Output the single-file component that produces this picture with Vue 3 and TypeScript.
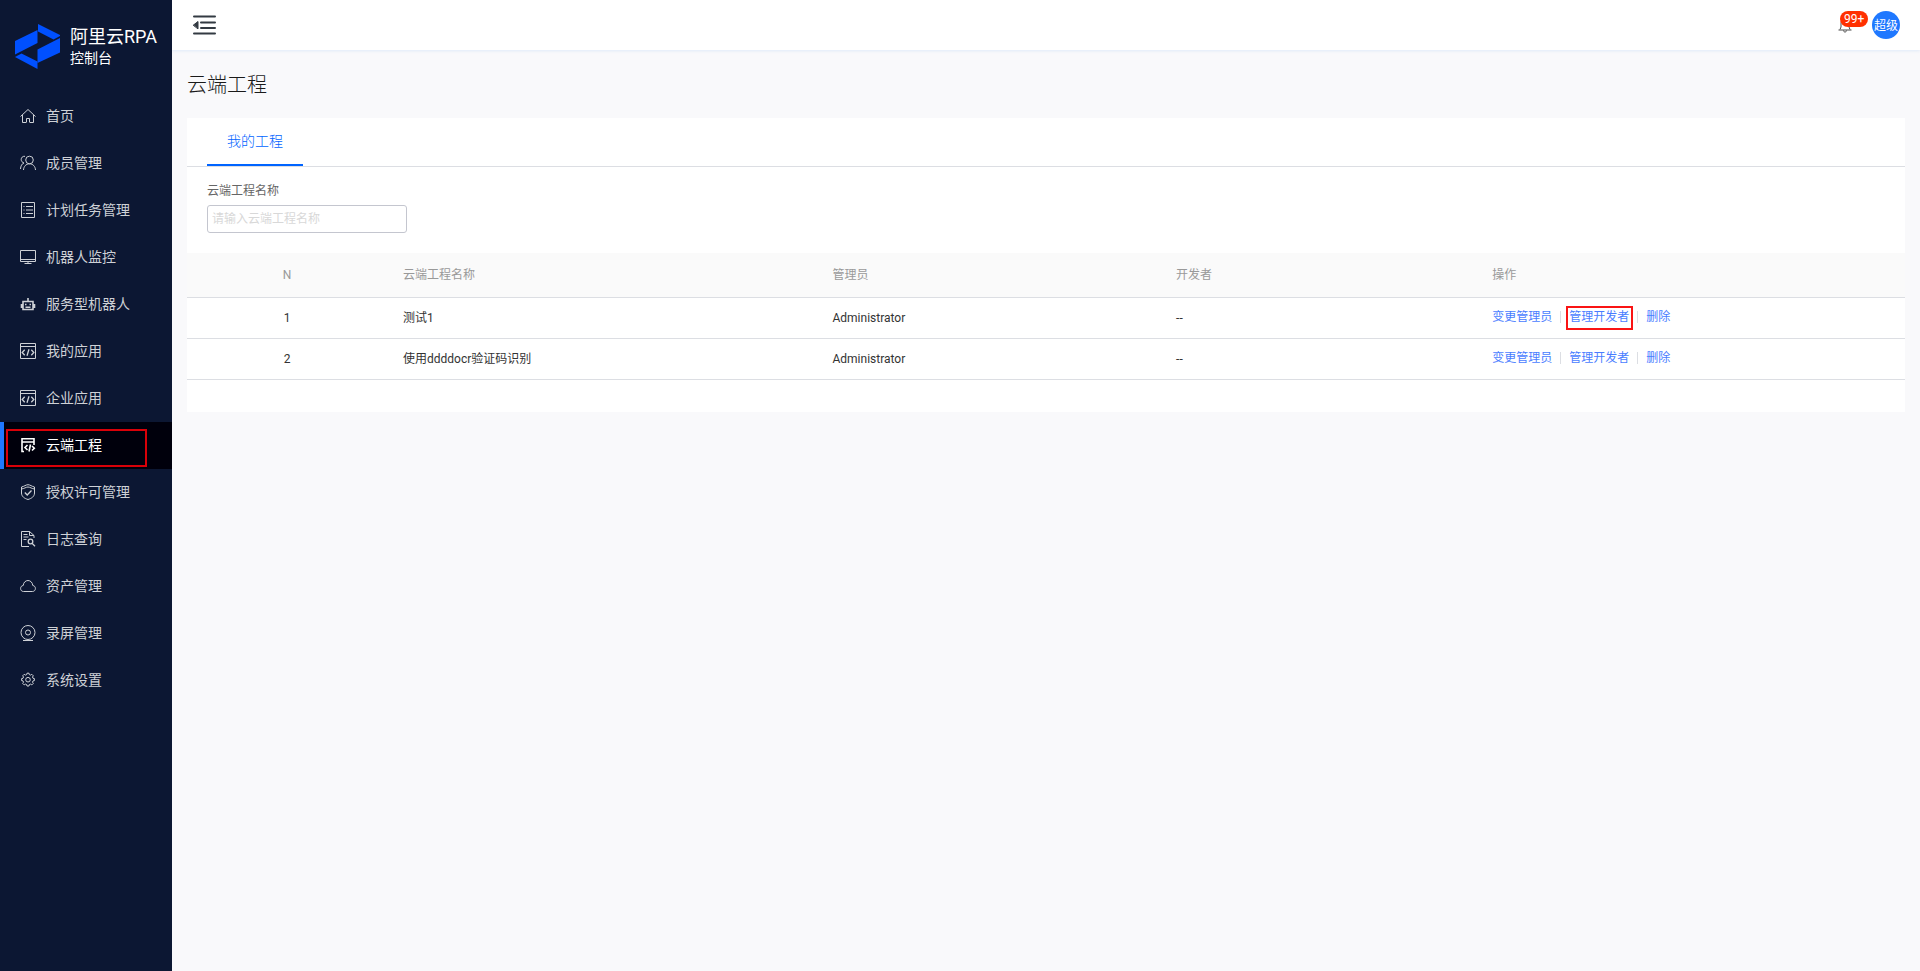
<script setup lang="ts">
import { ref } from 'vue'

interface MenuItem {
  label: string
  icon: string
  active?: boolean
}

interface Project {
  id: number
  name: string
  admin: string
  developer: string
  marked?: boolean
}

const menu: MenuItem[] = [
  { label: '首页', icon: 'home' },
  { label: '成员管理', icon: 'members' },
  { label: '计划任务管理', icon: 'tasks' },
  { label: '机器人监控', icon: 'monitor' },
  { label: '服务型机器人', icon: 'robot' },
  { label: '我的应用', icon: 'code' },
  { label: '企业应用', icon: 'code' },
  { label: '云端工程', icon: 'cloudProject', active: true },
  { label: '授权许可管理', icon: 'shield' },
  { label: '日志查询', icon: 'log' },
  { label: '资产管理', icon: 'cloud' },
  { label: '录屏管理', icon: 'camera' },
  { label: '系统设置', icon: 'gear' },
]

const projects: Project[] = [
  { id: 1, name: '测试1', admin: 'Administrator', developer: '--', marked: true },
  { id: 2, name: '使用ddddocr验证码识别', admin: 'Administrator', developer: '--' },
]

const keyword = ref('')
</script>

<template>
  <div class="layout">
    <aside class="sidebar">
      <div class="brand">
        <svg class="logo" viewBox="0 0 45 45" aria-hidden="true">
          <path d="M0 17 22.500 6V19L0 30.500Z" />
          <path d="M23 0 45 11V12L38.500 15.500 23 7.500Z" />
          <path d="M45 14V28.500L22.500 39V25.500Z" />
          <path d="M0 33 6.500 29.500 22.500 37.500V45Z" />
        </svg>
        <div class="brand-text">
          <strong class="brand-name">阿里云RPA</strong>
          <span class="brand-sub">控制台</span>
        </div>
      </div>
      <nav class="menu" aria-label="主菜单">
        <a
          v-for="item in menu"
          :key="item.label"
          href="#"
          class="menu-item"
          :class="{ active: item.active }"
        >
          <svg class="menu-icon" viewBox="0 0 16 16" aria-hidden="true">
            <g v-if="item.icon === 'home'">
              <path d="M.5 8.500 8 1.500l7.500 7M2.500 7v7.500h3.500M13.500 7v7.500H10M6.500 14.500v-4h3v4" />
            </g>
            <g v-else-if="item.icon === 'members'">
              <circle cx="9.500" cy="5" r="3.800" />
              <path d="M3.500 15c.2-3.500 2.500-6.200 6-6.200s5.800 2.700 6 6.200M5 1.300C2.500 1 1.200 2.800 1.200 4.500S2.300 7.500 4 8C1.800 8.700.7 11 .5 14" />
            </g>
            <g v-else-if="item.icon === 'tasks'">
              <path d="M1.500.5h13v15h-13zM3.500 4.500h1M3.500 8h1M3.500 11.500h1M6 4.500h7M6 8h7M6 11.500h7" />
            </g>
            <g v-else-if="item.icon === 'monitor'">
              <path d="M.5 1.500h15v11H.5zM1 10.500h14M8 12.500v2M4.500 14.500h7" />
            </g>
            <g v-else-if="item.icon === 'robot'" class="bold">
              <path d="M8 2v3M3 5.500h10V13.500H3zM1.500 8v4M14.500 8v4M5.500 11.200h5" />
              <path d="M5 8.500h1.500M9.500 8.500H11" />
            </g>
            <g v-else-if="item.icon === 'code'">
              <path d="M.5.5h15v15H.5zM.5 3.500h15" />
              <path class="glyph" d="M4.700 6.800 2.200 9.500l2.500 2.700M11.300 6.800l2.500 2.700-2.500 2.700M9 6.200l-2 6.600" />
            </g>
            <g v-else-if="item.icon === 'cloudProject'" class="bold">
              <path d="M4 14.500H2V1.800h12V8M2 5h12M7.500 8 5 10.500 7.500 13M12 9l2.300 2.200L12 13.500M10.500 7.500l-1.500 7" />
            </g>
            <g v-else-if="item.icon === 'shield'">
              <path d="M1.500 3C4 2.500 6 .7 8 .7S12 2.500 14.500 3v6c0 3.500-3 5.500-6.500 6.500C4.500 14.500 1.500 12.500 1.500 9zM1.500 5C4 4.800 6 3 8 3s4 1.800 6.500 2" />
              <path class="glyph" d="M4.800 8.500l2.400 2.500L11.500 6.500" />
            </g>
            <g v-else-if="item.icon === 'log'">
              <path d="M9 15.500H1.500V.5h8l4.500 4V7M9.500.5v4H14M3.500 3.500h4M3.500 6h5M3.500 8.500h3" />
              <circle class="glyph" cx="10.500" cy="10.500" r="2.300" />
              <path class="glyph" d="M12 12.300l3 3" />
            </g>
            <g v-else-if="item.icon === 'cloud'">
              <path d="M3.500 13.500C1.500 13.500.6 12 .6 10.500c0-1.700 1-2.800 2.600-3C3.500 4.500 5.500 2.500 8 2.500s4.500 2 4.800 5c1.600.2 2.600 1.300 2.600 3 0 1.500-1 3-3 3z" />
            </g>
            <g v-else-if="item.icon === 'camera'">
              <circle cx="8" cy="7.500" r="7" />
              <circle cx="8" cy="7.500" r="2.500" />
              <path d="M3 15.500h10" />
            </g>
            <g v-else>
              <path d="M6.700 2.600 7 1.200h2l.3 1.400 1.300.5 1.200-.8 1.500 1.500-.8 1.200.5 1.300 1.400.3v2l-1.400.3-.5 1.300.8 1.200-1.500 1.500-1.200-.8-1.300.5-.3 1.400H7l-.3-1.400-1.300-.5-1.200.8-1.500-1.500.8-1.200L3 8.900l-1.400-.3v-2L3 6.300 3.500 5l-.8-1.200 1.500-1.500 1.200.8z" />
              <circle cx="8" cy="7.700" r="2.300" />
            </g>
          </svg>
          <span class="menu-label">{{ item.label }}</span>
        </a>
      </nav>
    </aside>

    <div class="main">
      <header class="topbar">
        <button type="button" class="icon-button" aria-label="收起菜单">
          <svg class="fold-icon" viewBox="0 0 24 22" aria-hidden="true">
            <path d="M2 2.500h21M9 8.500h14M9 14h14M2 19.500h21" />
            <path class="fold-arrow" d="M1.500 11 6 7.500v7z" />
          </svg>
        </button>
        <div class="user-tools">
          <button type="button" class="icon-button" aria-label="通知">
            <svg class="bell-icon" viewBox="0 0 14 16" aria-hidden="true">
              <path d="M.5 13h13M2 12.500l1-2.500V6c0-3 2-4.500 4-4.500S11 3 11 6v4l1 2.500M5.500 13.500c0 2 3 2 3 0" />
            </svg>
            <span class="badge">99+</span>
          </button>
          <button type="button" class="avatar">超级</button>
        </div>
      </header>

      <main class="content">
        <h1 class="page-title">云端工程</h1>
        <section class="card">
          <div class="tabs" role="tablist">
            <button type="button" class="tab" role="tab" aria-selected="true">我的工程</button>
          </div>
          <form class="filter" @submit.prevent>
            <label class="filter-label" for="project-name">云端工程名称</label>
            <input
              id="project-name"
              v-model="keyword"
              class="filter-input"
              type="text"
              placeholder="请输入云端工程名称"
            />
          </form>
          <table class="table">
            <colgroup>
              <col class="col-index" />
              <col class="col-name" />
              <col class="col-admin" />
              <col class="col-dev" />
              <col class="col-actions" />
            </colgroup>
            <thead>
              <tr>
                <th class="center">N</th>
                <th>云端工程名称</th>
                <th>管理员</th>
                <th>开发者</th>
                <th>操作</th>
              </tr>
            </thead>
            <tbody>
              <tr v-for="project in projects" :key="project.id">
                <td class="center">{{ project.id }}</td>
                <td>{{ project.name }}</td>
                <td>{{ project.admin }}</td>
                <td>{{ project.developer }}</td>
                <td>
                  <div class="actions">
                    <a href="#">变更管理员</a>
                    <a href="#" :class="{ marked: project.marked }">管理开发者</a>
                    <a href="#">删除</a>
                  </div>
                </td>
              </tr>
            </tbody>
          </table>
        </section>
      </main>
    </div>
  </div>
</template>

<style>
body {
  margin: 0;
  background: #f9f9fb;
}
</style>

<style scoped>
.layout {
  display: flex;
  min-height: 100vh;
  font-family: Roboto, "Noto Sans CJK SC", sans-serif;
  font-size: 12px;
  color: #333;
}

a {
  text-decoration: none;
}

button {
  margin: 0;
  padding: 0;
  border: 0;
  background: none;
  font-family: inherit;
  cursor: pointer;
}

.sidebar {
  position: relative;
  z-index: 1;
  flex: 0 0 172px;
  background: #0c1733;
}

.brand {
  display: flex;
  align-items: center;
  gap: 10px;
  box-sizing: border-box;
  height: 93px;
  padding-left: 15px;
}

.logo {
  width: 45px;
  height: 45px;
  fill: #0050ff;
}

.brand-text {
  display: flex;
  flex-direction: column;
  color: #fff;
  white-space: nowrap;
}

.brand-name {
  font-size: 18px;
  font-weight: 400;
  line-height: 22px;
}

.brand-sub {
  font-size: 14px;
  line-height: 20px;
}

.menu-item {
  position: relative;
  display: flex;
  align-items: center;
  gap: 10px;
  box-sizing: border-box;
  height: 47px;
  border-left: 4px solid transparent;
  padding: 0 0 1px 16px;
  color: #ced1d6;
  font-size: 14px;
}

.menu-label {
  padding-bottom: 3px;
}

.menu-item.active {
  border-left-color: #1f78ff;
  background: #00000c;
  color: #fff;
}

.menu-item.active::after {
  content: "";
  position: absolute;
  inset: 7px 25px 2px 2px;
  border: 2px solid #d90008;
}

.menu-icon {
  width: 16px;
  height: 16px;
  fill: none;
  stroke: currentColor;
  stroke-width: 1;
}

.menu-icon .glyph {
  stroke-width: 1.3;
}

.menu-icon .bold {
  stroke-width: 1.6;
}

.main {
  flex: 1;
  min-width: 0;
}

.topbar {
  display: flex;
  align-items: center;
  justify-content: space-between;
  height: 50px;
  padding: 0 20px;
  background: #fff;
  box-shadow: 0 1px 3px #dfeaf8;
}

.icon-button {
  display: flex;
  position: relative;
}

.fold-icon {
  width: 24px;
  height: 22px;
  fill: none;
  stroke: #333a42;
  stroke-width: 2;
  stroke-linecap: round;
}

.fold-icon .fold-arrow {
  fill: #333a42;
  stroke-width: 1;
}

.user-tools {
  display: flex;
  align-items: center;
  gap: 20px;
}

.bell-icon {
  width: 14px;
  height: 16px;
  fill: none;
  stroke: #4a4a4a;
  stroke-width: 1;
}

.badge {
  position: absolute;
  left: 2px;
  top: -6px;
  padding: 0 4px;
  border-radius: 8px;
  background: #ff3000;
  color: #fff;
  font-size: 12px;
  line-height: 16px;
}

.avatar {
  width: 28px;
  height: 28px;
  padding-bottom: 2px;
  border-radius: 50%;
  background: #1f78ff;
  color: #fff;
  font-size: 12px;
  white-space: nowrap;
}

.content {
  padding: 18px 15px;
}

.page-title {
  margin: 0;
  color: #1a1a1a;
  font-size: 20px;
  font-weight: 300;
  line-height: 34px;
}

.card {
  margin-top: 16px;
  padding-bottom: 32px;
  background: #fff;
}

.tabs {
  display: flex;
  height: 48px;
  padding: 0 20px;
  border-bottom: 1px solid #dcdee3;
}

.tab {
  padding: 0 20px 2px;
  border-bottom: 2px solid #0064ff;
  color: #0064ff;
  font-size: 14px;
  font-weight: 300;
}

.filter {
  display: flex;
  flex-direction: column;
  align-items: flex-start;
  gap: 4px;
  padding: 14px 20px 20px;
}

.filter-label {
  color: #666;
  line-height: 20px;
}

.filter-input {
  box-sizing: border-box;
  width: 200px;
  height: 28px;
  padding: 0 4px;
  border: 1px solid #c4c6cf;
  border-radius: 3px;
  color: #333;
  font-family: inherit;
  font-size: 12px;
}

.filter-input::placeholder {
  color: #d8d8d8;
}

.table {
  width: 100%;
  border-collapse: separate;
  border-spacing: 0;
  table-layout: fixed;
  line-height: 20px;
}

.col-index {
  width: 200px;
}

.col-name {
  width: 25%;
}

.col-admin {
  width: 20%;
}

.col-dev {
  width: 18.4%;
}

th,
td {
  padding: 10px 16px;
  border-bottom: 1px solid #dcdee3;
  text-align: left;
}

th {
  padding: 12px 16px;
  background: #fafafa;
  color: #999;
  font-weight: 400;
}

.center {
  text-align: center;
}

.actions {
  display: flex;
  align-items: center;
  padding-bottom: 2px;
}

.actions a {
  position: relative;
  color: #4a7dff;
  line-height: 18px;
}

.actions a + a {
  margin-left: 8px;
  padding-left: 9px;
}

.actions a + a::before {
  content: "";
  position: absolute;
  left: 0;
  top: 3px;
  height: 12px;
  border-left: 1px solid #dcdee3;
}

.actions .marked::after {
  content: "";
  position: absolute;
  inset: -2px -4px -4px 6px;
  border: 2px solid #fa1414;
}
</style>
